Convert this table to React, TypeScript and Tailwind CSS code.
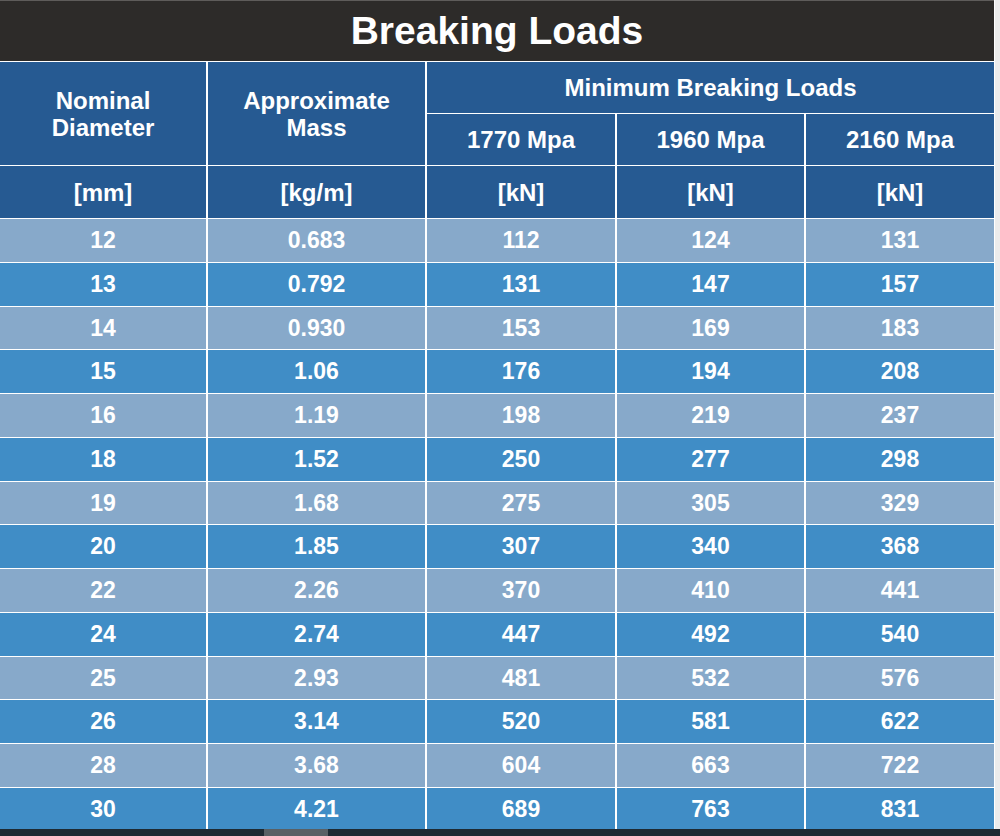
const rows: [string, string, string, string, string][] = [
  ["12", "0.683", "112", "124", "131"],
  ["13", "0.792", "131", "147", "157"],
  ["14", "0.930", "153", "169", "183"],
  ["15", "1.06", "176", "194", "208"],
  ["16", "1.19", "198", "219", "237"],
  ["18", "1.52", "250", "277", "298"],
  ["19", "1.68", "275", "305", "329"],
  ["20", "1.85", "307", "340", "368"],
  ["22", "2.26", "370", "410", "441"],
  ["24", "2.74", "447", "492", "540"],
  ["25", "2.93", "481", "532", "576"],
  ["26", "3.14", "520", "581", "622"],
  ["28", "3.68", "604", "663", "722"],
  ["30", "4.21", "689", "763", "831"],
];

const head = "bg-[#265a92] flex items-center justify-center text-center text-white font-bold text-[24px] leading-[27px]";

export default function App() {
  return (
    <div className="h-[836px] w-[1000px] flex flex-col overflow-hidden bg-white font-['Liberation_Sans',Arial,sans-serif]">
      <div className="flex-1 flex overflow-hidden">
        <div className="w-[994px] flex flex-col bg-white">
          {/* Title */}
          <div className="h-[61px] shrink-0 bg-[#2d2b29] border-t border-[#5e5c5a] flex items-center justify-center">
            <h1 className="text-white font-bold text-[39px] leading-none pb-[2px]">Breaking Loads</h1>
          </div>

          {/* Table */}
          <div className="mt-px grid grid-cols-[206px_217px_188px_187px_188px] gap-x-[2px] gap-y-px grid-rows-[51px_51px_52px] auto-rows-[42.75px]">
            <div className={`${head} row-span-2`}>
              Nominal
              <br />
              Diameter
            </div>
            <div className={`${head} row-span-2`}>
              Approximate
              <br />
              Mass
            </div>
            <div className={`${head} col-span-3`}>Minimum Breaking Loads</div>
            <div className={head}>1770 Mpa</div>
            <div className={head}>1960 Mpa</div>
            <div className={head}>2160 Mpa</div>

            <div className={head}>[mm]</div>
            <div className={head}>[kg/m]</div>
            <div className={head}>[kN]</div>
            <div className={head}>[kN]</div>
            <div className={head}>[kN]</div>

            {rows.map((r, i) =>
              r.map((v, j) => (
                <div
                  key={`${i}-${j}`}
                  className={`flex items-center justify-center text-white font-bold text-[23px] ${
                    i % 2 === 0 ? "bg-[#87a9ca]" : "bg-[#408dc6]"
                  }`}
                >
                  {v}
                </div>
              ))
            )}
          </div>
        </div>

        {/* Vertical scrollbar track */}
        <div className="w-[6px] bg-[#ececec] border-l border-white" />
      </div>

      {/* Horizontal scrollbar */}
      <div className="h-[7px] shrink-0 bg-[#1e2a33] flex">
        <div className="ml-[264px] w-[64px] bg-[#596065]" />
      </div>
    </div>
  );
}
